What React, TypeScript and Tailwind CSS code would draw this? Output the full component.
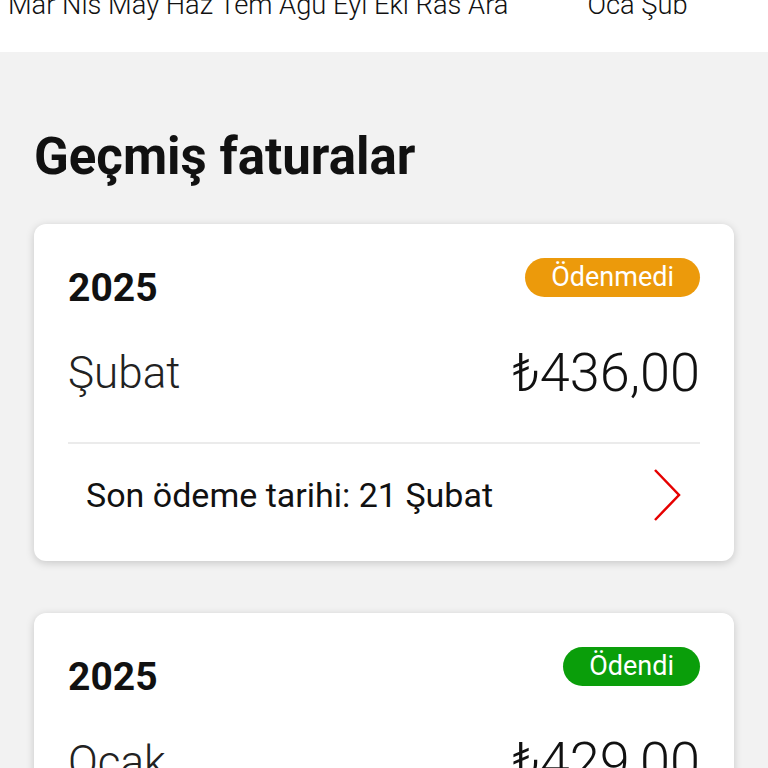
import React from "react";

type Invoice = {
  year: string;
  month: string;
  amount: string;
  paid: boolean;
  due?: string;
};

const INVOICES: Invoice[] = [
  { year: "2025", month: "Şubat", amount: "₺436,00", paid: false, due: "Son ödeme tarihi: 21 Şubat" },
  { year: "2025", month: "Ocak", amount: "₺429,00", paid: true, due: "Ödeme tarihi: 18 Ocak" },
];

function Chevron() {
  return (
    <svg width="30" height="54" viewBox="0 0 30 54" fill="none">
      <path d="M3 2 L27 27 L3 52" stroke="#e60000" strokeWidth="2.5" />
    </svg>
  );
}

function InvoiceCard({ inv }: { inv: Invoice }) {
  return (
    <div className="rounded-xl bg-white px-[34px] shadow-[0_2px_8px_rgba(0,0,0,0.18)]">
      <div className="flex items-start justify-between pt-[34px]">
        <span className="pt-[9px] text-[39px] font-bold leading-[42px] text-[#111]">{inv.year}</span>
        <span
          className={`flex h-[39px] items-center rounded-full px-[26px] text-[27px] font-normal leading-none text-white ${
            inv.paid ? "bg-[#0a9e0a]" : "bg-[#ec9a0b]"
          }`}
        >
          {inv.paid ? "Ödendi" : "Ödenmedi"}
        </span>
      </div>
      <div className="flex items-center justify-between pt-[36px] pb-[41px]">
        <span className="text-[44px] font-light leading-[56px] text-[#222]">{inv.month}</span>
        <span className="text-[54px] font-light leading-[56px] text-[#111]">{inv.amount}</span>
      </div>
      <div className="border-t-2 border-[#ebebeb]" />
      <div className="flex items-center justify-between pl-[18px] pr-[18px] pt-[24px] pb-[39px]">
        <span className="text-[34px] leading-[40px] text-[#111]">{inv.due}</span>
        <Chevron />
      </div>
    </div>
  );
}

export default function App() {
  return (
    <div className="min-h-screen bg-[#f2f2f2] font-['Roboto',sans-serif]">
      {/* Month strip */}
      <div className="h-[52px] overflow-hidden bg-white">
        <div className="-mt-[13px] flex gap-[79px] whitespace-nowrap pl-[8px] text-[27.3px] font-light leading-[36px] text-[#111]">
          <span>Mar Nis May Haz Tem Agu Eyl Eki Ras Ara</span>
          <span>Oca Şub</span>
        </div>
      </div>

      <div className="px-[34px] pt-[74px]">
        <h2 className="text-[51px] font-bold leading-[62px] text-[#111]">Geçmiş faturalar</h2>
        <div className="mt-[36px] flex flex-col gap-[52px] pb-10">
          {INVOICES.map((inv) => (
            <InvoiceCard key={inv.month} inv={inv} />
          ))}
        </div>
      </div>
    </div>
  );
}
